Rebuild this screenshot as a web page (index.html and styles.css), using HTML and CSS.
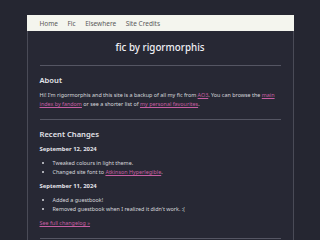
FILE: index.html
```html
<!DOCTYPE html>
<html lang="en">
<head>
<meta charset="utf-8">
<title>fic by rigormorphis</title>
<link rel="stylesheet" href="styles.css">
</head>
<body>
<div class="page">
  <nav class="nav">
    <a href="#">Home</a>
    <a href="#">Fic</a>
    <a href="#">Elsewhere</a>
    <a href="#">Site Credits</a>
  </nav>
  <main class="main">
    <h1 class="title">fic by rigormorphis</h1>
    <hr class="rule">
    <h2 class="heading">About</h2>
    <p class="text">Hi! I'm rigormorphis and this site is a backup of all my fic from <a href="#">AO3</a>. You can browse the <a href="#">main index by fandom</a> or see a shorter list of <a href="#">my personal favourites</a>.</p>
    <hr class="rule">
    <h2 class="heading">Recent Changes</h2>
    <h3 class="date">September 12, 2024</h3>
    <ul class="list">
      <li>Tweaked colours in light theme.</li>
      <li>Changed site font to <a href="#">Atkinson Hyperlegible</a>.</li>
    </ul>
    <h3 class="date">September 11, 2024</h3>
    <ul class="list">
      <li>Added a guestbook!</li>
      <li>Removed guestbook when I realized it didn't work. :(</li>
    </ul>
    <p class="text"><a href="#">See full changelog »</a></p>
    <hr class="rule">
  </main>
</div>
</body>
</html>
```
FILE: styles.css
```css
html, body {
  margin: 0;
  padding: 0;
  background: #252631;
  font-family: "Noto Sans", "DejaVu Sans", sans-serif;
  color: #e4e4ea;
  overflow: hidden;
}
.page {
  width: 267px;
  margin: 15px auto 0;
}
.nav {
  background: #f4f5ee;
  height: 16px;
  display: flex;
  align-items: center;
  gap: 9.5px;
  padding-left: 13px;
}
.nav a {
  font-size: 6.5px;
  color: #5a5a5a;
  text-decoration: none;
}
.main {
  background: #272834;
  border-left: 1px solid #4a4b57;
  border-right: 1px solid #4a4b57;
  padding: 9px 12px 20px;
}
.title {
  margin: 1px 0 0;
  font-size: 9.8px;
  font-weight: 500;
  text-align: center;
  line-height: 14px;
  color: #f0f0f4;
}
.rule {
  border: 0;
  height: 1px;
  background: #555663;
  margin: 10px 0 9px;
}
.heading {
  margin: 0 0 5px;
  font-size: 7.6px;
  font-weight: 600;
  line-height: 11px;
}
.text {
  margin: 0;
  font-size: 5.4px;
  line-height: 9px;
  color: #d8d8de;
}
a {
  color: #c75fa3;
}
.date {
  margin: 4px 0 5px;
  font-size: 5.9px;
  font-weight: 700;
  line-height: 9px;
}
.list {
  margin: 0 0 5px;
  padding-left: 13px;
  font-size: 5.4px;
  line-height: 9px;
  color: #d8d8de;
}
```
